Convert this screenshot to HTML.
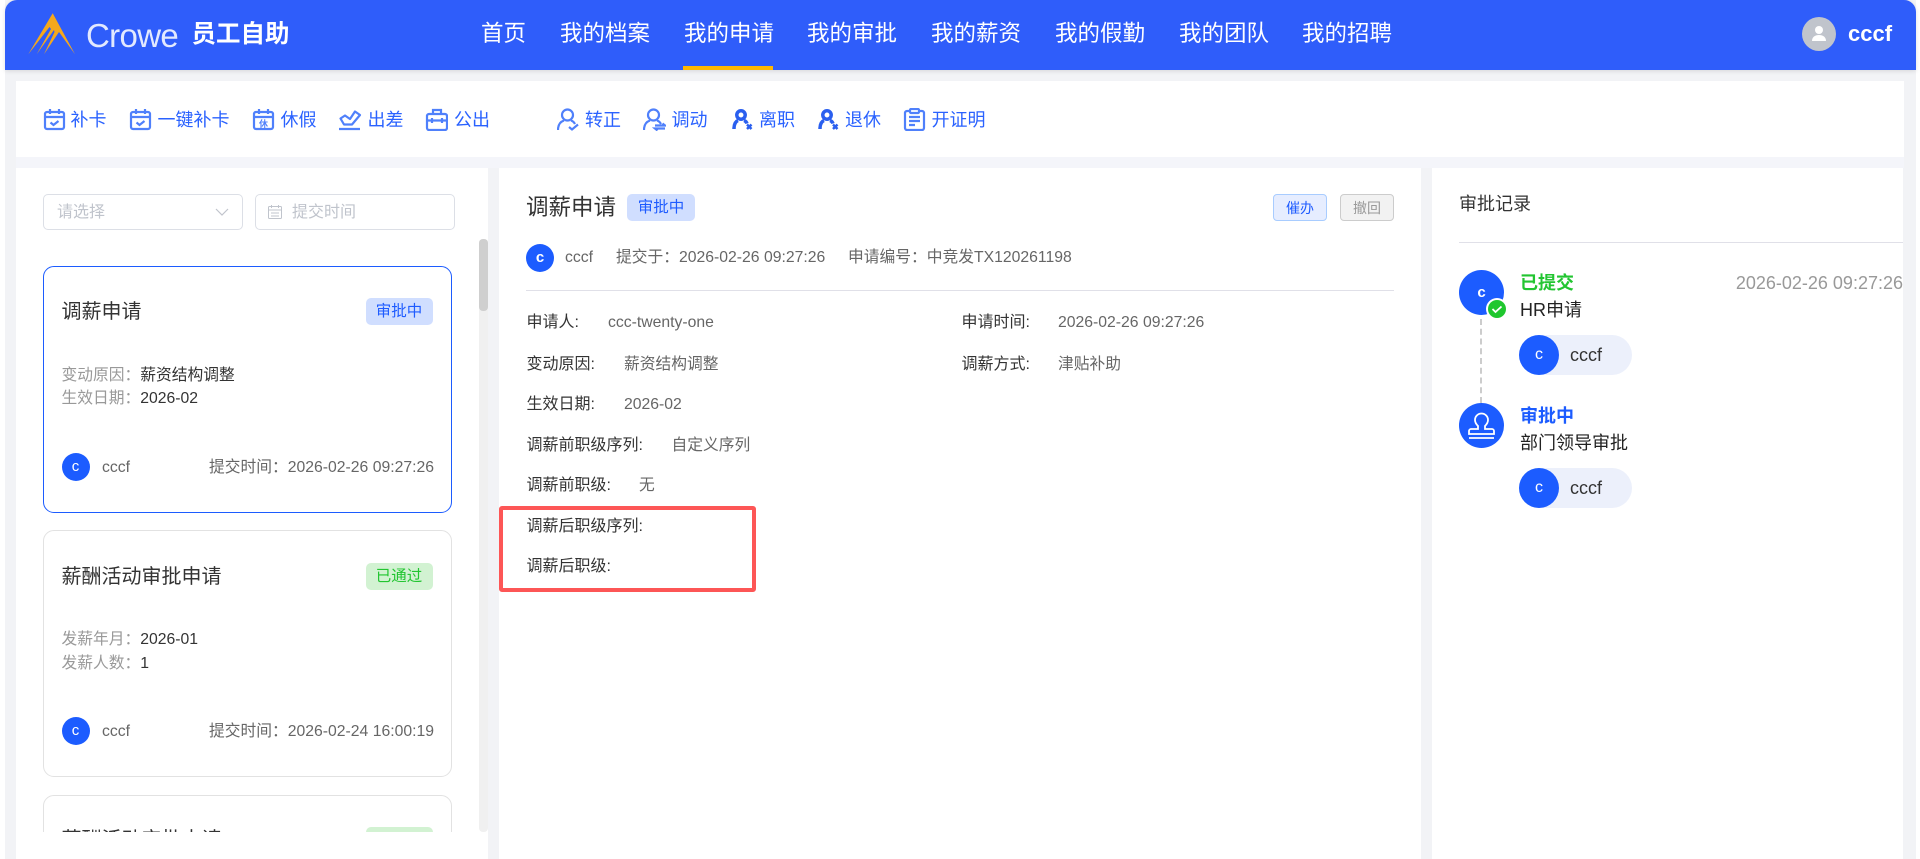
<!DOCTYPE html>
<html lang="zh"><head><meta charset="utf-8"><title>员工自助</title>
<style>
*{box-sizing:border-box;margin:0;padding:0}
html,body{width:1920px;height:859px;overflow:hidden;background:#fff}
body{font-family:"Liberation Sans","Noto Sans CJK SC",sans-serif;position:relative;font-size:16px}
.a{position:absolute;white-space:nowrap}
.t{position:absolute;white-space:nowrap;line-height:24px;height:24px}
.nav{position:absolute;top:19px;font-size:22.5px;line-height:30px;color:#fff;white-space:nowrap}
.tb{position:absolute;top:108px;font-size:18px;line-height:24px;color:#2a62ff;white-space:nowrap}
.ic{position:absolute;top:108px;width:23px;height:23px;fill:none;stroke:#4f80fb;stroke-width:2.2}
.card{position:absolute;left:0;width:409px;height:247px;background:#fff;border:1.5px solid #e2e2e2;border-radius:11px}
.tag{position:absolute;width:67px;height:27px;border-radius:5px;text-align:center;font-size:15.5px;line-height:27px}
.blue{background:#d0deff;color:#1f5cff}.green{background:#d2f2d2;color:#22c531}
.av{position:absolute;width:28px;height:28px;border-radius:50%;background:#1c5cff;color:#fff;text-align:center;font-size:15px;line-height:28px}
.lab{color:#999;font-size:15.75px}.val{color:#333;font-size:15.75px}
.g{color:#666;font-size:15.75px}
.row{color:#333}.v{color:#666;font-size:15.75px}
.pill{position:absolute;left:1519px;width:113px;height:40px;border-radius:20px;background:#ecf0fb}
.pill i{position:absolute;left:0;top:0;width:40px;height:40px;border-radius:50%;background:#1c5cff;color:#fff;font-style:normal;text-align:center;font-size:16px;line-height:40px}
.pill span{position:absolute;left:51px;top:8px;font-size:18px;line-height:24px;color:#333}
</style></head><body>
<div class="a" style="left:4.5px;top:0;width:1911px;height:859px;background:#f2f3f6"></div>
<div class="a" style="left:4.5px;top:0;width:1911px;height:70px;background:#2f5dfa;border-radius:12px 12px 0 0;box-shadow:0 1px 5px rgba(0,0,0,.12)"></div>

<svg class="a" style="left:26px;top:10px" width="52" height="48" viewBox="0 0 52 48"><path d="M26.7 3.3 L49 44.3 L33 22 L18 44.3 L28.5 22 L28 20 L10.7 44.3 L25 19 L23.5 17 L2.3 44.3 Z" fill="#f5a81c"/></svg>
<div class="t" style="left:86px;top:16px;height:40px;line-height:40px;font-size:33px;letter-spacing:-.65px;color:#f2f5ff;opacity:.92">Crowe</div>
<div class="t" style="left:191.5px;top:19px;height:32px;line-height:32px;font-size:24.5px;font-weight:700;color:#fff">员工自助</div>

<div class="nav" style="left:481px">首页</div>
<div class="nav" style="left:560px">我的档案</div>
<div class="nav" style="left:684px">我的申请</div>
<div class="nav" style="left:807px">我的审批</div>
<div class="nav" style="left:931px">我的薪资</div>
<div class="nav" style="left:1055px">我的假勤</div>
<div class="nav" style="left:1179px">我的团队</div>
<div class="nav" style="left:1302px">我的招聘</div>
<div class="a" style="left:683px;top:66px;width:90px;height:4px;background:#ffb800"></div>

<svg class="a" style="left:1802px;top:17px" width="34" height="34" viewBox="0 0 34 34"><circle cx="17" cy="17" r="17" fill="#c0c4cc"/><circle cx="17" cy="13" r="4" fill="#fff"/><path d="M10 24c0-4 3-6 7-6s7 2 7 6z" fill="#fff"/></svg>
<div class="t" style="left:1848px;top:19px;height:30px;line-height:30px;font-size:22px;font-weight:700;color:#fff">cccf</div>

<div class="a" style="left:16px;top:81px;width:1888px;height:76px;background:#fff"></div>
<div class="a" style="left:16px;top:157px;width:1888px;height:11px;background:#f4f5fa"></div>

<svg class="ic" style="left:43px" viewBox="0 0 23 23"><rect x="2" y="4" width="19" height="17" rx="2"/><path d="M2 9h19M7 1v5M16 1v5M7.5 14.500l3 2.500 5-4"/></svg>
<div class="tb" style="left:70.5px">补卡</div>
<svg class="ic" style="left:129px" viewBox="0 0 23 23"><rect x="2" y="4" width="19" height="17" rx="2"/><path d="M2 9h19M7 1v5M16 1v5M7.5 14.500l3 2.500 5-4"/></svg>
<div class="tb" style="left:157.5px">一键补卡</div>
<svg class="ic" style="left:252px" viewBox="0 0 23 23"><rect x="2" y="4" width="19" height="17" rx="2"/><path d="M2 9h19M7 1v5M16 1v5"/><text x="11.5" y="19" text-anchor="middle" font-size="9" font-weight="700" fill="#4f80fb" stroke="none">休</text></svg>
<div class="tb" style="left:280.5px">休假</div>
<svg class="ic" style="left:339px" viewBox="0 0 23 23"><path d="M1.500 10.500L6 7.500l5 3.500 5-7.500 5 3.500-8 9.500H5z" stroke-linejoin="round"/><path d="M0 21h21"/></svg>
<div class="tb" style="left:367.5px">出差</div>
<svg class="ic" style="left:425px" viewBox="0 0 23 23"><rect x="2" y="6" width="20" height="16" rx="2"/><path d="M8 6V2h8v4M2 12.500h20M7 10v5M17 10v5"/></svg>
<div class="tb" style="left:454px">公出</div>

<svg class="ic" style="left:557px" viewBox="0 0 23 23"><circle cx="10.500" cy="7" r="5.500"/><path d="M1 22c0-6 3-8.500 6-9.500M14 12.500c1.500.500 3 1.500 4 3.500M12 19l3 2.500 6-5"/></svg>
<div class="tb" style="left:585px">转正</div>
<svg class="ic" style="left:643px" viewBox="0 0 23 23"><circle cx="10.500" cy="7" r="5.500"/><path d="M1 22c0-6 3-8.500 6-9.500M14 12.500c1.500.500 3 1.500 4 3.500M12 17.500h10l-2.500-2M22 20.500H12l2.500 2"/></svg>
<div class="tb" style="left:671.5px">调动</div>
<svg class="ic" style="left:731px;stroke:#2a5fef;stroke-width:3.5" viewBox="0 0 23 23"><circle cx="10" cy="7" r="4.200"/><path d="M3 21c0-5 1.500-7.500 4-8.500M13 12.500c1.500.500 2.500 1.500 3 3"/><path d="M16 16.500l4.500 4.500M20.500 16.500L16 21" stroke-width="2.500"/></svg>
<div class="tb" style="left:759px">离职</div>
<svg class="ic" style="left:817px;stroke:#2a5fef;stroke-width:3.5" viewBox="0 0 23 23"><circle cx="10" cy="7" r="4.200"/><path d="M3 21c0-5 1.500-7.500 4-8.500M13 12.500c1.500.500 2.500 1.500 3 3"/><path d="M16 16.500l4.500 4.500M20.500 16.500L16 21" stroke-width="2.500"/></svg>
<div class="tb" style="left:845px">退休</div>
<svg class="ic" style="left:903px" viewBox="0 0 23 23"><rect x="2" y="3" width="19" height="19" rx="2"/><rect x="7" y="1" width="9" height="4" rx="1" fill="#fff"/><path d="M6 9h11M6 13h11M6 17h6"/></svg>
<div class="tb" style="left:931.5px">开证明</div>

<!-- left panel -->
<div class="a" style="left:16px;top:168px;width:472px;height:691px;background:#fff"></div>
<div class="a" style="left:43px;top:194px;width:200px;height:36px;border:1px solid #dcdfe6;border-radius:5px"></div>
<div class="t" style="left:57px;top:201px;color:#c0c4cc;font-size:16px">请选择</div>
<svg class="a" style="left:215px;top:207px" width="14" height="10" viewBox="0 0 14 10"><path d="M1 2l6 6 6-6" fill="none" stroke="#c0c4cc" stroke-width="1.200"/></svg>
<div class="a" style="left:255px;top:194px;width:200px;height:36px;border:1px solid #dcdfe6;border-radius:5px"></div>
<svg class="a" style="left:268px;top:205px" width="14" height="14" viewBox="0 0 14 14" fill="none" stroke="#c0c4cc"><rect x=".5" y="1.500" width="13" height="12" rx="1"/><path d="M.5 5h13M3.500 0v3M10.500 0v3M3 8h8M3 11h8"/></svg>
<div class="t" style="left:292px;top:201px;color:#c0c4cc;font-size:16px">提交时间</div>

<div class="a" style="left:479px;top:239px;width:9px;height:593px;background:#f0f0f0;border-radius:4px"></div>
<div class="a" style="left:479px;top:239px;width:9px;height:72px;background:#cfcfcf;border-radius:4px"></div>

<div class="a" style="left:43px;top:266px;width:409px;height:566px;overflow:hidden">
 <div class="card" style="top:0;border-color:#1c5cff">
  <div class="t" style="left:17.5px;top:31px;height:28px;line-height:28px;font-size:20px;color:#333">调薪申请</div>
  <div class="tag blue" style="left:321.5px;top:30.5px">审批中</div>
  <div class="t" style="left:17.5px;top:97px"><span class="lab">变动原因：</span><span class="val">薪资结构调整</span></div>
  <div class="t" style="left:17.5px;top:120px"><span class="lab">生效日期：</span><span class="val">2026-02</span></div>
  <div class="av" style="left:17.5px;top:185.5px">c</div>
  <div class="t g" style="left:58px;top:189px">cccf</div>
  <div class="t g" style="right:17px;top:189px">提交时间：2026-02-26 09:27:26</div>
 </div>
 <div class="card" style="top:264px">
  <div class="t" style="left:17.5px;top:32px;height:28px;line-height:28px;font-size:20px;color:#333">薪酬活动审批申请</div>
  <div class="tag green" style="left:321.5px;top:32px">已通过</div>
  <div class="t" style="left:17.5px;top:97px"><span class="lab">发薪年月：</span><span class="val">2026-01</span></div>
  <div class="t" style="left:17.5px;top:121px"><span class="lab">发薪人数：</span><span class="val">1</span></div>
  <div class="av" style="left:17.5px;top:186px">c</div>
  <div class="t g" style="left:58px;top:189px">cccf</div>
  <div class="t g" style="right:17px;top:189px">提交时间：2026-02-24 16:00:19</div>
 </div>
 <div class="card" style="top:529px;height:60px">
  <div class="t" style="left:17.5px;top:30px;height:24px;line-height:28px;font-size:20px;color:#333">薪酬活动审批申请</div>
  <div class="tag green" style="left:321.5px;top:31px">已通过</div>
 </div>
</div>

<!-- middle panel -->
<div class="a" style="left:499px;top:168px;width:922px;height:691px;background:#fff"></div>
<div class="t" style="left:526px;top:192px;height:32px;line-height:32px;font-size:22.5px;color:#333">调薪申请</div>
<div class="tag blue" style="left:627px;top:194px;width:68px;line-height:28px">审批中</div>
<div class="a" style="left:1273px;top:194px;width:54px;height:27px;background:#e6edff;border:1px solid #a8ccff;border-radius:4px;text-align:center;font-size:14px;line-height:26px;color:#1f5cff">催办</div>
<div class="a" style="left:1340px;top:194px;width:54px;height:27px;background:#f2f2f2;border:1px solid #ccc;border-radius:4px;text-align:center;font-size:14px;line-height:26px;color:#999">撤回</div>
<div class="av" style="left:526px;top:244px;font-weight:700">c</div>
<div class="t g" style="left:565px;top:246px">cccf</div>
<div class="t g" style="left:616px;top:246px">提交于：2026-02-26 09:27:26</div>
<div class="t g" style="left:848px;top:246px">申请编号：中竞发TX120261198</div>
<div class="a" style="left:526px;top:290px;width:868px;height:1px;background:#e0e0e8"></div>

<div class="t row" style="left:526.5px;top:311px">申请人:</div><div class="t v" style="left:608px;top:311px">ccc-twenty-one</div>
<div class="t row" style="left:526.5px;top:353px">变动原因:</div><div class="t v" style="left:624px;top:353px">薪资结构调整</div>
<div class="t row" style="left:526.5px;top:393px">生效日期:</div><div class="t v" style="left:624px;top:393px">2026-02</div>
<div class="t row" style="left:526.5px;top:434px">调薪前职级序列:</div><div class="t v" style="left:671.5px;top:434px">自定义序列</div>
<div class="t row" style="left:526.5px;top:474px">调薪前职级:</div><div class="t v" style="left:639px;top:474px">无</div>
<div class="t row" style="left:526.5px;top:515px">调薪后职级序列:</div>
<div class="t row" style="left:526.5px;top:555px">调薪后职级:</div>
<div class="t row" style="left:961.5px;top:311px">申请时间:</div><div class="t v" style="left:1058px;top:311px">2026-02-26 09:27:26</div>
<div class="t row" style="left:961.5px;top:353px">调薪方式:</div><div class="t v" style="left:1058px;top:353px">津贴补助</div>
<div class="a" style="left:499px;top:506px;width:256.5px;height:86px;border:4.5px solid #fd5656;border-radius:3px"></div>

<!-- right panel -->
<div class="a" style="left:1432px;top:168px;width:471px;height:691px;background:#fff"></div>
<div class="t" style="left:1459px;top:192px;font-size:18px;color:#333">审批记录</div>
<div class="a" style="left:1459px;top:242px;width:444px;height:1px;background:#e0e0e8"></div>
<div class="a" style="left:1480px;top:319px;height:84px;border-left:2px dashed #ccc"></div>

<div class="a" style="left:1459px;top:270px;width:45px;height:45px;border-radius:50%;background:#1c5cff;color:#fff;text-align:center;font-size:15px;font-weight:700;line-height:45px">c</div>
<svg class="a" style="left:1486px;top:298px" width="22" height="22" viewBox="0 0 22 22"><circle cx="11" cy="11" r="11" fill="#fff"/><circle cx="11" cy="11" r="9" fill="#1fc72e"/><path d="M6.500 11l3 3 6-5.500" fill="none" stroke="#fff" stroke-width="1.800"/></svg>
<div class="t" style="left:1520px;top:271px;font-size:18px;font-weight:700;color:#22c531">已提交</div>
<div class="t" style="right:17px;top:271px;font-size:18px;color:#999">2026-02-26 09:27:26</div>
<div class="t" style="left:1520px;top:298px;font-size:18px;color:#222">HR申请</div>
<div class="pill" style="top:335px"><i>c</i><span>cccf</span></div>

<svg class="a" style="left:1459px;top:403px" width="45" height="45" viewBox="0 0 45 45"><circle cx="22.500" cy="22.500" r="22.500" fill="#1c5cff"/><path d="M19 23c-2-2-3-3.500-3-6a6.500 6.500 0 0 1 13 0c0 2.500-1 4-3 6v3h7c1 0 2 1 2 2v3H10v-3c0-1 1-2 2-2h7z" fill="none" stroke="#fff" stroke-width="1.800"/><path d="M10 35h25" stroke="#fff" stroke-width="1.800"/></svg>
<div class="t" style="left:1520px;top:404px;font-size:18px;font-weight:700;color:#1c5cff">审批中</div>
<div class="t" style="left:1520px;top:431px;font-size:18px;color:#222">部门领导审批</div>
<div class="pill" style="top:468px"><i>c</i><span>cccf</span></div>
</body></html>
